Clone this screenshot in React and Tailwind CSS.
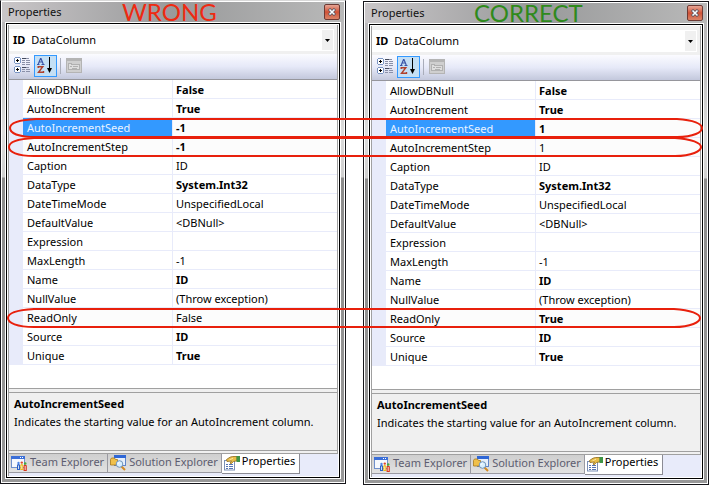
import React from 'react';

const sharedRows = [
  ['AllowDBNull', 'False', true],
  ['AutoIncrement', 'True', true],
  ['AutoIncrementSeed', '-1', true],
  ['AutoIncrementStep', '-1', true],
  ['Caption', 'ID', false],
  ['DataType', 'System.Int32', true],
  ['DateTimeMode', 'UnspecifiedLocal', false],
  ['DefaultValue', '<DBNull>', false],
  ['Expression', '', false],
  ['MaxLength', '-1', false],
  ['Name', 'ID', true],
  ['NullValue', '(Throw exception)', false],
  ['ReadOnly', 'False', false],
  ['Source', 'ID', true],
  ['Unique', 'True', true],
];

const correctValues = {
  AutoIncrementSeed: ['1', true],
  AutoIncrementStep: ['1', false],
  ReadOnly: ['True', true],
};

const correctRows = sharedRows.map(([name, value, bold]) =>
  correctValues[name] ? [name, ...correctValues[name]] : [name, value, bold]
);

const circled = ['AutoIncrementSeed', 'AutoIncrementStep', 'ReadOnly'];

function CategorizedIcon() {
  return (
    <svg width="17" height="17" viewBox="0 0 17 17" shapeRendering="crispEdges" aria-hidden="true">
      {[0, 9].map((y) => (
        <g key={y}>
          <rect x="1" y={y + 1} width="5" height="5" fill="#fff" />
          <path d={`M1 ${y}h5v1h-5zM1 ${y + 6}h5v1h-5zM0 ${y + 1}h1v5h-1zM6 ${y + 1}h1v5h-1z`} fill="#7b96c4" />
          <path d={`M2 ${y + 3}h3v1h-3zM3 ${y + 2}h1v3h-1z`} fill="#000" />
          <path d={`M8 ${y + 1}h4v1h-4z`} fill="#444a5c" />
          <path d={`M8 ${y + 3}h3v1h-3zM12 ${y + 3}h4v1h-4zM8 ${y + 5}h3v1h-3zM12 ${y + 5}h4v1h-4zM12 ${y + 1}h3v1h-3z`} fill="#8a90a8" />
        </g>
      ))}
      <path d="M8 7h3v1h-3zM12 7h4v1h-4z" fill="#8a90a8" />
    </svg>
  );
}

function SortIcon() {
  return (
    <svg width="17" height="17" viewBox="0 0 17 17" fill="none" aria-hidden="true">
      <path d="M0 7.500h2.500M4.500 7.500h3M1.300 7 3.500 1.500h.5L6.200 7M2 5h3.500" stroke="#3a55a8" strokeWidth="1.200" />
      <path d="M1.200 11V9.700h4.600L1.500 15.300h5V14" stroke="#b0402c" strokeWidth="1.400" />
      <path d="M12.500 0v13" stroke="#000" />
      <path d="M10 11h5l-2.500 5z" fill="#000" />
    </svg>
  );
}

function PagesIcon() {
  return (
    <svg width="16" height="15" viewBox="0 0 16 15" fill="none" shapeRendering="crispEdges" aria-hidden="true">
      <rect x=".5" y=".5" width="15" height="14" fill="#cfcfcf" stroke="#b4b4b4" />
      <path d="M1 2h14" stroke="#b4b4b4" strokeWidth="2" />
      <path d="M2.500 11.500v-6h3v1h8v5z" fill="#dedede" stroke="#b0b0b0" />
      <path d="M4 8.500h2M7 8.500h5M6 10.500h5" stroke="#b0b0b0" />
    </svg>
  );
}

function TeamIcon() {
  return (
    <svg width="16" height="16" viewBox="0 0 16 16" aria-hidden="true">
      <rect x=".5" y="1.500" width="13" height="11" fill="#f6f9fe" stroke="#6f90cc" />
      <path d="M0 1h14v3H0z" fill="#3b6fd8" />
      <path d="M9 2h1v1H9zM11 2h1v1h-1z" fill="#fff" />
      <path d="M6 9.800q1.500-1.600 3 0V15H6z" fill="#2c62c8" />
      <circle cx="7.500" cy="8" r="1.200" fill="#4e86e6" />
      <path d="M9.300 9.800q1.500-1.600 3 0V15h-3z" fill="#e9b91d" />
      <circle cx="10.800" cy="7.600" r="1.200" fill="#e0492c" />
      <path d="M12.600 10.500q1.600-1.600 3.200 0V16h-3.200z" fill="#d8381f" />
      <circle cx="14.200" cy="8.500" r="1.300" fill="#48a63c" />
      <path d="M7.500 10.500V14M10.800 10.500V14M14.200 11v4" stroke="#fff" strokeWidth=".8" />
    </svg>
  );
}

function SolutionIcon() {
  return (
    <svg width="16" height="16" viewBox="0 0 16 16" aria-hidden="true">
      <rect x="4.500" y=".5" width="11" height="10" fill="#e6effb" stroke="#5f84c8" />
      <path d="M4 0h12v3H4z" fill="#2f67d6" />
      <path d="M.5 4.500 1.500 3h3l1 1.500h2V10h-7z" fill="#f0c04a" stroke="#a8781a" strokeWidth=".8" />
      <path d="m11.500 11.500 3.500 3.500" stroke="#d48a22" strokeWidth="2" />
      <circle cx="9.500" cy="9" r="3.300" fill="#d8efff" stroke="#6f93ba" />
      <path d="M8 9q0-1.500 1.500-1.700" stroke="#fff" fill="none" />
    </svg>
  );
}

function PropertiesIcon() {
  return (
    <svg width="16" height="16" viewBox="0 0 16 16" aria-hidden="true">
      <rect x=".5" y="5.500" width="10" height="9.500" fill="#fff" stroke="#7a8fb5" />
      <path d="M2 9.500h2M5 9.500h4M2 11.500h2M5 11.500h4M2 13.500h2M5 13.500h4" stroke="#5474b4" />
      <path d="M2.500 4.500 6 2.200 8.500 1.500H13v4.300l-3.500.7L7 8.800 6 8l1.500-2L3 6.500z" fill="#e7bd4a" stroke="#8f6a1c" strokeWidth=".8" />
      <path d="M5.500 4.800 9 3.300" stroke="#fbe59b" />
      <path d="M12.500 1H16v6h-3.500z" fill="#3f9446" />
    </svg>
  );
}

function Tab({ icon, label, active }) {
  return active ? (
    <button type="button" role="tab" aria-selected="true" className="flex h-5 w-[78px] items-start gap-0.5 whitespace-nowrap border-r border-b border-[#8b8b94] bg-white pt-px pl-0.5 text-black">
      {icon}
      <span className="leading-3">{label}</span>
    </button>
  ) : (
    <button type="button" role="tab" aria-selected="false" className="flex h-[19px] items-start gap-[3px] whitespace-nowrap border-r border-b border-[#9a9aa2] bg-linear-to-b from-[#cfcfcf] to-[#e2e2e2] pt-px pr-[3px] pl-0.5 text-[#5d5d70]">
      {icon}
      <span className="leading-[14px]">{label}</span>
    </button>
  );
}

function PropertyWindow({ id, verdict, verdictClass, titleClass, frameClass, rows }) {
  return (
    <section className={`border bg-white p-px ${frameClass}`}>
      <div className="bg-[linear-gradient(#b9b7b9_0px,#bdbdbd_60px,#dcdcdc_130px,#cfcfcf_175px,#8c8c8c_176px,#989898_100%)] px-[3px] pb-[3px]">
        <header className="-mx-[3px] flex h-5 items-center bg-linear-to-r from-[#c9c6c8] via-[#999a9b] to-[#b9b9b9] pr-1 pl-1.5">
          <h2 className={`shrink-0 text-[#111] ${titleClass}`}>Properties</h2>
          <strong className={`font-['Lato','Noto_Sans',sans-serif] text-2xl leading-5 font-normal ${verdictClass}`}>{verdict}</strong>
          <button type="button" aria-label="Close" className="ml-auto flex h-4 w-4 items-center justify-center rounded-xs border border-[#6d3a34] bg-linear-to-b from-[#e6a595] via-[#cf5136] to-[#d98468]">
            <svg width="8" height="8" viewBox="0 0 8 8" aria-hidden="true">
              <path d="m1 1 6 6M7 1 1 7" stroke="#4d5361" strokeWidth="3" />
              <path d="m1.500 1.500 5 5M6.500 1.500l-5 5" stroke="#fff" strokeWidth="1.600" />
            </svg>
          </button>
        </header>
        <div className="border border-white bg-black p-px">
          <div className="bg-white p-px">
            <div className="border-x border-[#a0a0a0] bg-[#f0f0f0]">
              <div className="pt-1 pr-[3px] pb-[3px]">
                <div className="flex h-[22px] items-center gap-1.5 bg-white pr-px pl-1">
                  <label htmlFor={id} className="font-bold">ID</label>
                  <select id={id} className="h-5 min-w-0 flex-1 appearance-none bg-transparent p-0 outline-none">
                    <option>DataColumn</option>
                  </select>
                  <span className="flex h-5 w-[11px] items-center justify-center bg-[#f0f0f0]">
                    <svg width="5" height="3" viewBox="0 0 5 3" aria-hidden="true">
                      <path d="M0 0h5L2.500 3z" />
                    </svg>
                  </span>
                </div>
              </div>
              <div className="flex h-[26px] items-center border-b border-[#96969c] bg-linear-to-b from-[#fbfbff] via-[#e6e9f8] to-[#c3c8dc] pb-0.5 pl-[5px]">
                <button type="button" aria-label="Categorized">
                  <CategorizedIcon />
                </button>
                <button type="button" aria-label="Alphabetical" className="ml-[3px] flex h-[22px] w-[23px] items-center justify-center border border-[#3399ff] bg-[#c4dff5]">
                  <SortIcon />
                </button>
                <span className="ml-[3px] h-4 w-px bg-[#a9adba]" />
                <button type="button" aria-label="Property Pages" disabled className="ml-[5px]">
                  <PagesIcon />
                </button>
              </div>
              <div className="h-[309px] border-b border-[#a0a0a0] bg-white">
                <table className="w-full table-fixed border-separate border-spacing-0">
                  <colgroup>
                    <col className="w-3.5" />
                    <col className="w-[150px]" />
                    <col />
                  </colgroup>
                  <tbody>
                    {rows.map(([name, value, bold]) => {
                      const selected = name === 'AutoIncrementSeed';
                      const tint = circled.includes(name) ? 'bg-[#fcfcfc]' : 'bg-white';
                      return (
                        <tr key={name} className="h-[19px]">
                          <td className="border-b border-[#e8ebfa] bg-[#e8ebfa] p-0" />
                          <th scope="row" className={`border-r border-b border-[#e8ebfa] p-0 pt-px pl-1 text-left font-normal ${selected ? 'bg-[#3399ff] text-[#e9f3ff]' : tint}`}>
                            {name}
                          </th>
                          <td className={`border-b border-[#e8ebfa] p-0 pt-px pl-[3px] ${tint} ${bold ? 'font-bold' : ''}`}>{value}</td>
                        </tr>
                      );
                    })}
                  </tbody>
                </table>
              </div>
              <div className="mt-[3px] h-[59px] border-y border-[#a0a0a0] pt-0.5 pl-[5px] leading-[18px]">
                <h3 className="font-bold">AutoIncrementSeed</h3>
                <p className="whitespace-nowrap">Indicates the starting value for an AutoIncrement column.</p>
              </div>
              <div className="h-0.5" />
            </div>
            <div role="tablist" className="flex h-[23px] items-start border-t border-l border-[#a0a0a0] bg-[#e8ebfa]">
              <Tab icon={<TeamIcon />} label="Team Explorer" />
              <Tab icon={<SolutionIcon />} label="Solution Explorer" />
              <Tab icon={<PropertiesIcon />} label="Properties" active />
            </div>
          </div>
        </div>
      </div>
    </section>
  );
}

function Annotations() {
  return (
    <svg className="pointer-events-none absolute top-0 left-0" width="709" height="485" viewBox="0 0 709 485" fill="none" stroke="#e8200c" strokeWidth="2" aria-hidden="true">
      <path d="M36 119H677C694 120 702 124 702 128S694 137 677 137H36C18 137 10 133 10 128S18 120 36 119Z" />
      <path d="M34 138H675C692 139 701 143 701 147S692 156 675 156H34C17 156 9 152 9 147S17 139 34 138Z" />
      <path d="M34 309H674C691 310 700 314 700 318S691 327 674 327H34C17 327 8 323 8 318S17 310 34 309Z" />
    </svg>
  );
}

export default function App() {
  return (
    <main className="relative grid grid-cols-2 items-start gap-[17px] bg-white font-['Noto_Sans','Open_Sans',sans-serif] text-[11px] leading-4 text-black">
      <PropertyWindow id="wrong-component" verdict="WRONG" verdictClass="text-[#ee2a12]" titleClass="w-[114px]" frameClass="border-[#15151a] border-t-[#d8d8d8]" rows={sharedRows} />
      <div className="pt-px">
        <PropertyWindow id="correct-component" verdict="CORRECT" verdictClass="text-[#2f8a1c]" titleClass="w-[103px]" frameClass="border-[#15151a]" rows={correctRows} />
      </div>
      <Annotations />
    </main>
  );
}
